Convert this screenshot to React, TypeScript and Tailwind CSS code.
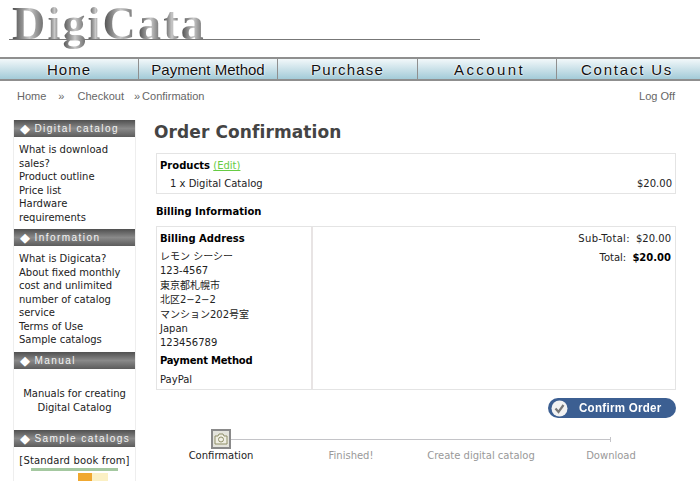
import React from 'react';

const FONT = { fontFamily: '"DejaVu Sans", "Noto Sans CJK JP", sans-serif' };

const NAV_ITEMS = [
  { label: 'Home', className: 'w-[138px] tracking-[1px]' },
  { label: 'Payment Method', className: 'w-[139px] tracking-[0px]' },
  { label: 'Purchase', className: 'w-[140px] tracking-[1.2px]' },
  { label: 'Account', className: 'w-[139px] tracking-[2.4px] pl-[5px]' },
  { label: 'Contact Us', className: 'flex-1 tracking-[1.8px] pr-[3px]' },
];
const STEPS = [
  { label: 'Confirmation', active: true },
  { label: 'Finished!', active: false },
  { label: 'Create digital catalog', active: false },
  { label: 'Download', active: false },
];
const ADDRESS = ['レモン シーシー', '123-4567', '東京都札幌市', '北区2−2−2', 'マンション202号室', 'Japan', '123456789'];
const LOGO_LETTERS = ['D', 'i', 'g', 'i', 'C', 'a', 't', 'a'];

const SideHead: React.FC<{ title: string }> = ({ title }) => (
  <div className="h-[17px] flex items-center pl-[6px] bg-gradient-to-b from-[#505050] via-[#8a8a8a] to-[#5c5c5c] text-[#f4f4f4] text-[10px] font-['Liberation_Sans'] tracking-[1.45px] whitespace-nowrap">
    <span className="text-[13px] mr-[3px] leading-none text-white">◆</span>
    {title}
  </div>
);

const SideLinks: React.FC<{ items: string[]; className?: string }> = ({ items, className }) => (
  <div className={`px-[5px] pt-[6px] text-[10px] leading-[13.5px] text-[#222222] ${className}`}>
    {items.map((t) => (
      <div key={t}>{t}</div>
    ))}
  </div>
);

const Sidebar = () => (
  <aside className="w-[123px] ml-[13px] h-[366px] overflow-hidden border-x border-[#eeeeee] shrink-0">
    <SideHead title="Digital catalog" />
    <SideLinks className="h-[92px]" items={['What is download sales?', 'Product outline', 'Price list', 'Hardware requirements']} />
    <SideHead title="Information" />
    <SideLinks className="h-[106px]" items={['What is Digicata?', 'About fixed monthly cost and unlimited number of catalog service', 'Terms of Use', 'Sample catalogs']} />
    <SideHead title="Manual" />
    <div className="h-[61px] flex items-center justify-center text-center text-[10px] leading-[14px] text-[#222222] pt-[3px]">
      <div>
        Manuals for creating
        <br />
        Digital Catalog
      </div>
    </div>
    <SideHead title="Sample catalogs" />
    <div className="pt-[7px] text-center text-[10px] tracking-[0.15px] leading-[13px] text-[#222222] whitespace-nowrap">[Standard book from]</div>
    <div className="mx-[17px] mt-[1px] h-[3px] bg-[#a4c8a0]" />
    <div className="ml-[64px] mt-[2px] w-[30px] h-[12px] flex">
      <div className="w-[14px] bg-[#f0a830]" />
      <div className="flex-1 bg-[#fbf0c4]" />
    </div>
  </aside>
);

export default function App() {
  return (
    <div className="w-[700px] h-[481px] overflow-hidden bg-white" style={FONT}>
      {/* Logo, the rule runs behind the letters */}
      <header className="relative h-[57px] pl-[12px]">
        <div className="absolute left-[9px] top-[39px] w-[471px] h-px bg-[#777777]" />
        <div className="relative flex font-['Liberation_Serif'] font-bold text-[46px] leading-[48px] tracking-[2.2px] text-transparent">
          {LOGO_LETTERS.map((c, i) => (
            <span key={i} className="pb-[4px] bg-clip-text bg-gradient-to-r from-[#4a4a4a] via-[#c8c8c8] to-[#5a5a5a]">
              {c}
            </span>
          ))}
        </div>
      </header>

      {/* Nav */}
      <nav className="h-[24px] flex border-y-2 border-[#8f8f8f] bg-gradient-to-b from-[#f2f8fa] to-[#a3cbd8]">
        {NAV_ITEMS.map((item, i) => (
          <div
            key={item.label}
            className={`${item.className} pt-[2px] flex items-center justify-center font-['Liberation_Sans'] text-[15px] text-[#111111] [text-shadow:0_0_2px_#ffffff,0_0_2px_#ffffff] ${i > 0 ? 'border-l border-[#8f8f8f]' : ''}`}
          >
            {item.label}
          </div>
        ))}
      </nav>

      {/* Breadcrumb */}
      <div className="h-[39px] pl-[17px] pr-[25px] flex items-center justify-between font-['Liberation_Sans'] text-[11px] text-[#666666] pb-[8px]">
        <div className="flex whitespace-nowrap">
          <span>Home</span>
          <span className="ml-[12px]">»</span>
          <span className="ml-[13px]">Checkout</span>
          <span className="ml-[10px]">»</span>
          <span className="ml-[2px]">Confirmation</span>
        </div>
        <span>Log Off</span>
      </div>

      <div className="flex">
        <Sidebar />

        <main className="ml-[17px] w-[522px] text-[10px] text-[#222222]">
          <h1 className="text-[17px] leading-[24px] font-bold text-[#444444] tracking-[0.1px] mb-[9px] ml-[1px] whitespace-nowrap">Order Confirmation</h1>

          {/* Products */}
          <section className="ml-[3px] w-[520px] h-[41px] border border-[#e4e4e4] px-[3px] pt-[5px]">
            <div className="leading-[14px]">
              <b className="text-black">Products</b> <span className="text-[#66cc44] underline">(Edit)</span>
            </div>
            <div className="flex justify-between leading-[14px] mt-[4px] pl-[10px]">
              <span>1 x Digital Catalog</span>
              <span>$20.00</span>
            </div>
          </section>

          <h2 className="ml-[3px] mt-[11px] leading-[14px] font-bold text-black">Billing Information</h2>

          {/* Billing */}
          <section className="ml-[3px] mt-[7px] w-[520px] h-[164px] border border-[#e4e4e4] flex">
            <div className="w-[156px] border-r-2 border-[#e8e4e4] px-[3px] pt-[5px]">
              <b className="block text-black leading-[14px] mb-[4px]">Billing Address</b>
              {ADDRESS.map((line) => (
                <div key={line} className="leading-[14.4px]">
                  {line}
                </div>
              ))}
              <b className="block text-black leading-[14px] tracking-[-0.2px] mt-[3px]">Payment Method</b>
              <div className="leading-[14px] mt-[5px]">PayPal</div>
            </div>
            <div className="flex-1 pt-[5px] pr-[4px] text-right">
              <div className="leading-[14px]">
                <span className="tracking-[0.3px]">Sub-Total:</span> <span className="ml-[3px]">$20.00</span>
              </div>
              <div className="leading-[14px] mt-[5px]">
                Total: <b className="ml-[3px] text-black">$20.00</b>
              </div>
            </div>
          </section>

          {/* Confirm button */}
          <div className="flex justify-end mt-[8px] mr-[-1px]">
            <button className="w-[128px] h-[20px] rounded-full bg-[#3c5f92] flex items-center pl-[3px] text-white font-['Liberation_Sans'] font-bold text-[13px] tracking-[0.3px] overflow-hidden">
              <svg width="17" height="17" viewBox="0 0 17 17" className="shrink-0">
                <circle cx="8.5" cy="8.5" r="8" fill="#f2f2f2" />
                <path d="M4.5 8.5l3 3.5 5-7" fill="none" stroke="#777777" strokeWidth="2.2" />
              </svg>
              <span className="ml-[11px] whitespace-nowrap origin-left scale-x-[0.89]">Confirm Order</span>
            </button>
          </div>

          {/* Steps */}
          <div className="ml-[3px] w-[520px] mt-[11px]">
            <div className="flex items-center h-[20px] pl-[55px] pr-[65px]">
              <div className="w-[20px] h-[20px] bg-[#e4e4dc] border-2 border-[#8a8a8a] flex items-center justify-center shrink-0">
                <svg width="14" height="12" viewBox="0 0 14 12">
                  <path d="M1 3h3l1-2h4l1 2h3v8H1z" fill="#f0efe4" stroke="#8f8f68" />
                  <circle cx="7" cy="6.5" r="2.5" fill="none" stroke="#8f8f68" />
                </svg>
              </div>
              <div className="flex-1 h-px bg-[#c4c4c8]" />
              <div className="w-px h-[5px] bg-[#c4c4c8]" />
            </div>
            <div className="grid grid-cols-4 text-center leading-[14px]">
              {STEPS.map((s) => (
                <span key={s.label} className={s.active ? 'text-[#222222]' : 'text-[#999999]'}>
                  {s.label}
                </span>
              ))}
            </div>
          </div>
        </main>
      </div>
    </div>
  );
}
